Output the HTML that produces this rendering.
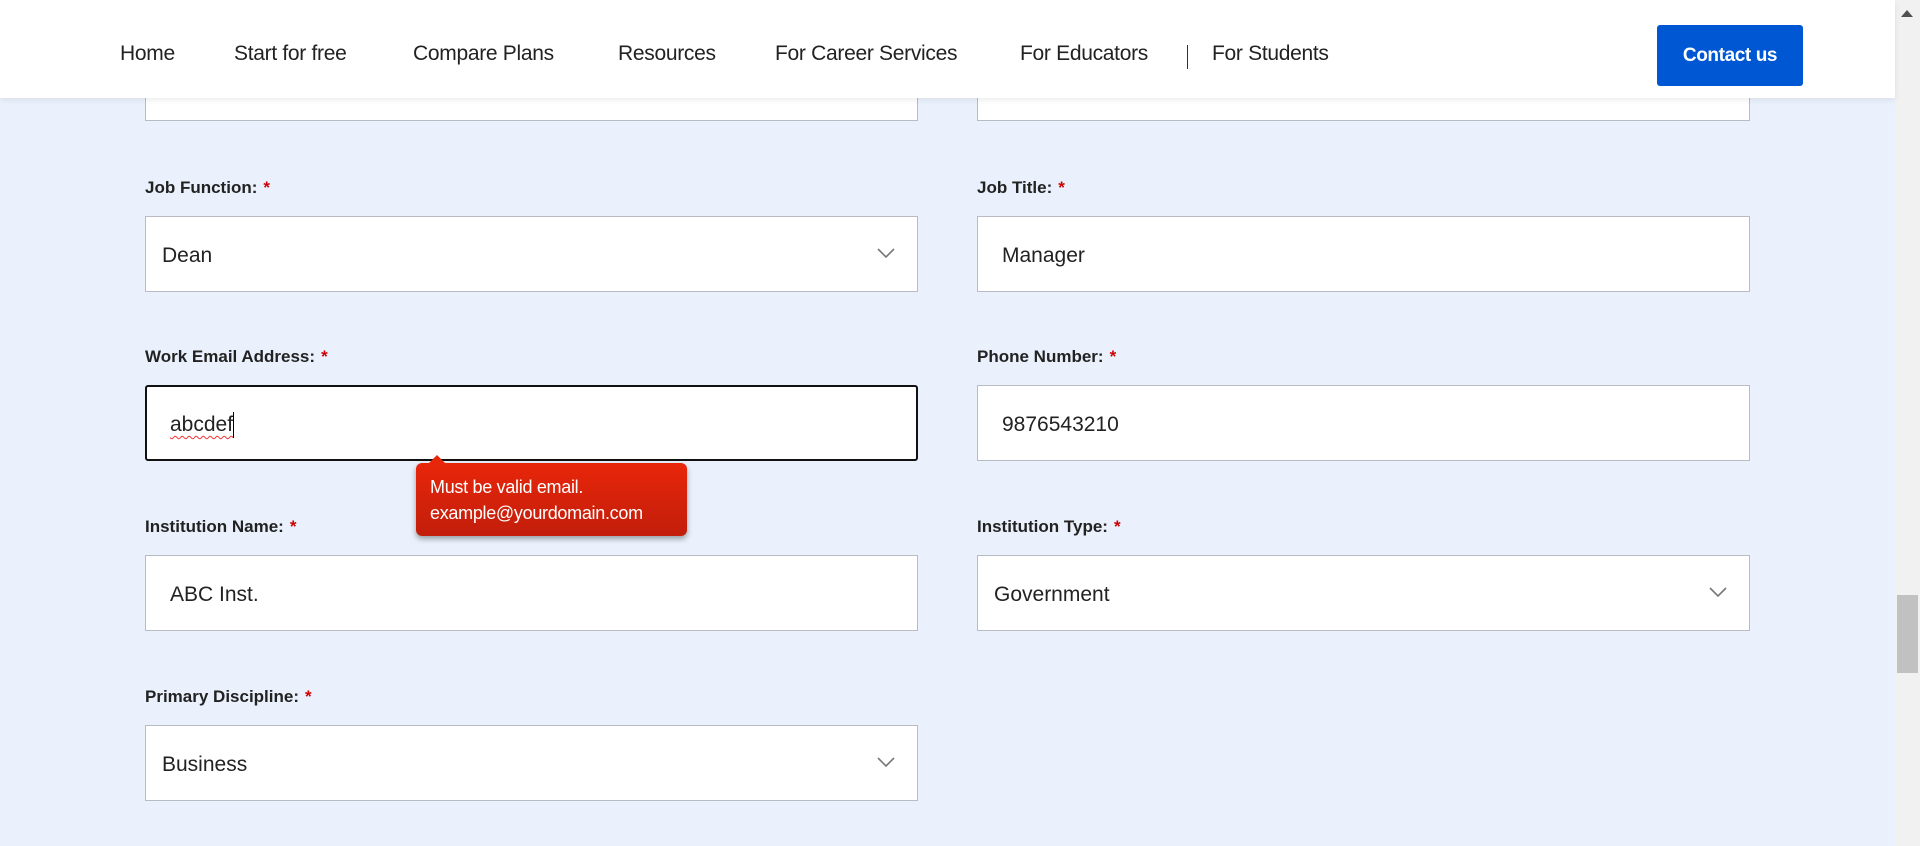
<!DOCTYPE html>
<html><head><meta charset="utf-8"><style>
*{box-sizing:border-box;margin:0;padding:0}
body{width:1920px;height:846px;overflow:hidden;background:#eaf1fc;font-family:"Liberation Sans",sans-serif;color:#1d1d1d;position:relative}
.hdr{position:absolute;left:0;top:0;width:1895px;height:98px;background:#fff;box-shadow:0 2px 6px rgba(0,0,0,.08);z-index:5}
.nav{position:absolute;top:42px;font-size:21px;color:#222;letter-spacing:-0.3px}
.sep{position:absolute;left:1187px;top:45px;width:1px;height:24px;background:#333}
.btn{position:absolute;left:1657px;top:25px;width:146px;height:61px;background:#0057d4;border-radius:3px;color:#fff;font-weight:bold;font-size:19px;text-align:center;line-height:62px;letter-spacing:-0.4px}
.lbl{position:absolute;font-weight:bold;font-size:17px;color:#222}
.lbl span{color:#c00;margin-left:6px}
.in{position:absolute;background:#fff;border:1px solid #b8bcc2;height:76px;font-size:21px;line-height:78px;color:#222}
.L{left:145px;width:773px}.R{left:977px;width:773px}
.chev{position:absolute;right:22px;top:30px}
.sb{position:absolute;left:1895px;top:0;width:25px;height:846px;background:#f1f1f1}
.th{position:absolute;left:1897px;top:595px;width:21px;height:78px;background:#c1c1c1}
.tip{position:absolute;left:416px;top:463px;width:271px;height:73px;background:linear-gradient(#e8260a,#c21e0b);border-radius:6px;box-shadow:0 3px 6px rgba(0,0,0,.35);color:#fff;font-size:18px;line-height:26px;padding:11px 14px 9px;letter-spacing:-0.3px}
.tip:before{content:"";position:absolute;left:13px;top:-8px;border:8px solid transparent;border-top:0;border-bottom-color:#e8260a}
</style></head><body>
<div class="hdr">
<div class="nav" style="left:120px">Home</div>
<div class="nav" style="left:234px">Start for free</div>
<div class="nav" style="left:413px">Compare Plans</div>
<div class="nav" style="left:618px">Resources</div>
<div class="nav" style="left:775px">For Career Services</div>
<div class="nav" style="left:1020px">For Educators</div>
<div class="sep"></div>
<div class="nav" style="left:1212px">For Students</div>
<div class="btn">Contact us</div>
</div>
<div class="in L" style="top:45px"></div>
<div class="in R" style="top:45px"></div>

<div class="lbl" style="left:145px;top:178px">Job Function:<span>*</span></div>
<div class="lbl" style="left:977px;top:178px">Job Title:<span>*</span></div>
<div class="in L" style="top:216px;padding-left:16px">Dean<svg class="chev" width="18" height="12" viewBox="0 0 18 12"><path d="M1 2l8 8 8-8" fill="none" stroke="#777" stroke-width="1.6"/></svg></div>
<div class="in R" style="top:216px;padding-left:24px">Manager</div>

<div class="lbl" style="left:145px;top:347px">Work Email Address:<span>*</span></div>
<div class="lbl" style="left:977px;top:347px">Phone Number:<span>*</span></div>
<div class="in L" style="top:385px;padding-left:23px;border:2px solid #111;border-radius:3px;line-height:76px"><span style="text-decoration:underline wavy #e33;text-decoration-thickness:1px;text-underline-offset:4px">abcdef</span><span style="display:inline-block;width:1px;height:26px;background:#000;vertical-align:middle"></span></div>
<div class="in R" style="top:385px;padding-left:24px">9876543210</div>

<div class="lbl" style="left:145px;top:517px">Institution Name:<span>*</span></div>
<div class="lbl" style="left:977px;top:517px">Institution Type:<span>*</span></div>
<div class="in L" style="top:555px;padding-left:24px">ABC Inst.</div>
<div class="in R" style="top:555px;padding-left:16px">Government<svg class="chev" width="18" height="12" viewBox="0 0 18 12"><path d="M1 2l8 8 8-8" fill="none" stroke="#777" stroke-width="1.6"/></svg></div>

<div class="lbl" style="left:145px;top:687px">Primary Discipline:<span>*</span></div>
<div class="in L" style="top:725px;padding-left:16px">Business<svg class="chev" width="18" height="12" viewBox="0 0 18 12"><path d="M1 2l8 8 8-8" fill="none" stroke="#777" stroke-width="1.6"/></svg></div>

<div class="tip">Must be valid email.<br>example@yourdomain.com</div>
<div class="sb"></div><div class="th"></div>
<div style="position:absolute;left:1901px;top:10px;border:6px solid transparent;border-top:0;border-bottom:7px solid #505050"></div>
</body></html>
